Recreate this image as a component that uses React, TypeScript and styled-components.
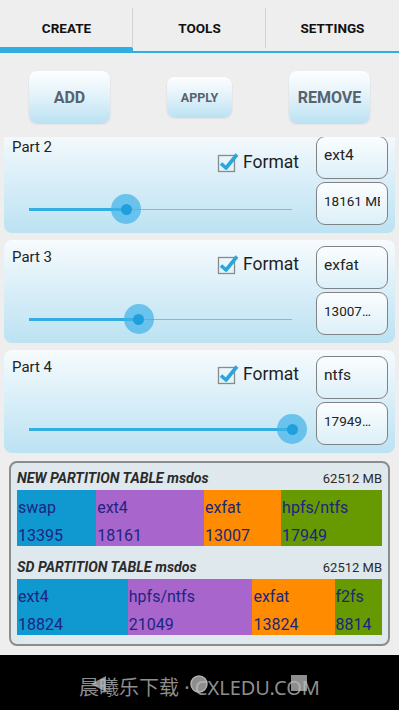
import React from "react";
import styled, { createGlobalStyle } from "styled-components";

const GlobalStyle = createGlobalStyle`
  html, body {
    margin: 0;
    padding: 0;
    background: #eeeeee;
  }
  body {
    font-family: Roboto, "Noto Sans", sans-serif;
  }
  * {
    box-sizing: border-box;
  }
`;

const tabs = ["CREATE", "TOOLS", "SETTINGS"];

// formatDrop: the first (partly scrolled) row draws its checkbox a bit lower
const parts = [
  { name: "Part 2", fs: "ext4", size: "18161 MB", value: 0.369, formatDrop: 8 },
  { name: "Part 3", fs: "exfat", size: "13007…", value: 0.418, formatDrop: 0 },
  { name: "Part 4", fs: "ntfs", size: "17949…", value: 1, formatDrop: 0 },
];

const tables = [
  {
    title: "NEW PARTITION TABLE msdos",
    total: "62512 MB",
    segments: [
      { fs: "swap", size: 13395, w: 79, color: "#1098d1" },
      { fs: "ext4", size: 18161, w: 108, color: "#a866cd" },
      { fs: "exfat", size: 13007, w: 77, color: "#ff8c00" },
      { fs: "hpfs/ntfs", size: 17949, w: 101, color: "#679a00" },
    ],
  },
  {
    title: "SD PARTITION TABLE msdos",
    total: "62512 MB",
    segments: [
      { fs: "ext4", size: 18824, w: 111, color: "#1098d1" },
      { fs: "hpfs/ntfs", size: 21049, w: 125, color: "#a866cd" },
      { fs: "exfat", size: 13824, w: 82, color: "#ff8c00" },
      { fs: "f2fs", size: 8814, w: 47, color: "#679a00" },
    ],
  },
];

const CheckIcon = () => (
  <svg width="22" height="22" viewBox="0 0 22 22">
    <rect x="1.5" y="4.5" width="16" height="16" fill="none" stroke="#8a8a8a" strokeWidth="1.3" />
    <path d="M4 12.5 L9 17 L20 3.5" fill="none" stroke="#2aa6db" strokeWidth="3.6" strokeLinejoin="round" />
  </svg>
);

const App = () => {
  return (
    <Screen>
      <GlobalStyle />
      <TabBar>
        {tabs.map((t, i) => (
          <Tab key={t} $active={i === 0}>
            {t}
          </Tab>
        ))}
      </TabBar>

      <ActionRow>
        <ActionButton $size="large">ADD</ActionButton>
        <ActionButton $size="small">APPLY</ActionButton>
        <ActionButton $size="large">REMOVE</ActionButton>
      </ActionRow>

      <ScrollView>
        <PartList>
          {parts.map((p) => (
            <PartCard key={p.name}>
              <PartLeft>
                <PartTop>
                  <PartLabel>{p.name}</PartLabel>
                  <CheckRow $drop={p.formatDrop}>
                    <CheckIcon />
                    <CheckText>Format</CheckText>
                  </CheckRow>
                </PartTop>
                <Slider>
                  <SliderFill style={{ width: `${p.value * 100}%` }} />
                  <SliderRail />
                  <Thumb style={{ left: `calc(${p.value * 100}% - 15px)` }}>
                    <ThumbDot />
                  </Thumb>
                </Slider>
              </PartLeft>
              <FieldCol>
                <Field $small={false}>
                  <FieldText>{p.fs}</FieldText>
                </Field>
                <Field $small>
                  <FieldText>{p.size}</FieldText>
                </Field>
              </FieldCol>
            </PartCard>
          ))}
        </PartList>
      </ScrollView>

      <TablePanel>
        {tables.map((t) => (
          <TableSection key={t.title}>
            <TableHeader>
              <TableTitle>{t.title}</TableTitle>
              <TableTotal>{t.total}</TableTotal>
            </TableHeader>
            <Bar>
              {t.segments.map((s) => (
                <Segment key={s.fs} $color={s.color} $grow={s.w}>
                  <span>{s.fs}</span>
                  <span>{s.size}</span>
                </Segment>
              ))}
            </Bar>
          </TableSection>
        ))}
      </TablePanel>

      <Spacer />

      <NavBar>
        <NavIcon>
          <svg width="20" height="20" viewBox="0 0 20 20">
            <path d="M2 10 L17 2 L17 18 Z" fill="#8e8e8e" />
          </svg>
        </NavIcon>
        <NavIcon>
          <svg width="22" height="22" viewBox="0 0 22 22">
            <circle cx="11" cy="10" r="8" fill="#8e8e8e" stroke="#b0b0b0" strokeWidth="1.5" />
          </svg>
        </NavIcon>
        <NavIcon>
          <svg width="20" height="20" viewBox="0 0 20 20">
            <rect x="2" y="1" width="16" height="16" fill="#8e8e8e" />
          </svg>
        </NavIcon>
        <Watermark>晨曦乐下载 · CXLEDU.COM</Watermark>
      </NavBar>
    </Screen>
  );
};

export default App;

const Screen = styled.div`
  display: flex;
  flex-direction: column;
  width: 399px;
  height: 710px;
  background: #eeeeee;
  overflow: hidden;
`;

const TabBar = styled.div`
  display: grid;
  grid-template-columns: repeat(3, 1fr);
  height: 53px;
  border-bottom: 2px solid #2eaee3;
`;

const Tab = styled.div<{ $active: boolean }>`
  position: relative;
  display: flex;
  align-items: center;
  justify-content: center;
  padding-top: 4px;
  font-size: 13.5px;
  font-weight: 700;
  color: #111;
  box-shadow: ${(p) => (p.$active ? "inset 0 -4px 0 #2eaee3" : "none")};

  &:not(:last-child)::after {
    content: "";
    position: absolute;
    right: 0;
    top: 8px;
    bottom: 3px;
    width: 1px;
    background: #d2d2d2;
  }
`;

const ActionRow = styled.div`
  display: flex;
  justify-content: space-between;
  align-items: center;
  height: 84px;
  padding: 4px 29px 0 29px;
`;

const ActionButton = styled.div<{ $size: "large" | "small" }>`
  display: flex;
  align-items: center;
  justify-content: center;
  width: ${(p) => (p.$size === "large" ? "81px" : "65px")};
  height: ${(p) => (p.$size === "large" ? "52px" : "40px")};
  border-radius: 8px;
  background: linear-gradient(180deg, #fdfeff 0%, #e4f3fa 45%, #bbe2f3 100%);
  box-shadow: 0 1px 2px rgba(0, 0, 0, 0.12);
  font-size: ${(p) => (p.$size === "large" ? "16px" : "12.5px")};
  font-weight: 700;
  color: #57636d;
`;

const ScrollView = styled.div`
  height: 319px;
  overflow: hidden;
`;

const PartList = styled.div`
  display: flex;
  flex-direction: column;
  gap: 7px;
  padding: 0 4px;
  margin-top: -7px;
`;

const PartCard = styled.div`
  display: flex;
  height: 103px;
  padding: 6px 7px 8px 8px;
  border-radius: 8px;
  background: linear-gradient(180deg, #f7fbfd 0%, #d8eef8 50%, #bce2f2 100%);
`;

const PartLeft = styled.div`
  flex: 1;
  display: flex;
  flex-direction: column;
`;

const PartTop = styled.div`
  display: flex;
  justify-content: space-between;
  align-items: flex-start;
`;

const PartLabel = styled.div`
  margin-top: 2px;
  font-size: 15px;
  line-height: 18px;
  color: #222;
`;

const CheckRow = styled.div<{ $drop: number }>`
  display: flex;
  align-items: center;
  gap: 4px;
  margin-top: ${(p) => 7 + p.$drop}px;
  margin-right: 17px;
`;

const CheckText = styled.span`
  font-size: 17.5px;
  line-height: 22px;
  color: #1e1e1e;
`;

const Slider = styled.div`
  position: relative;
  display: flex;
  align-items: center;
  width: 263px;
  height: 30px;
  margin: auto 0 1px 17px;
`;

const SliderFill = styled.div`
  height: 3px;
  background: #33ade2;
`;

const SliderRail = styled.div`
  flex: 1;
  height: 1px;
  background: #8fb7c8;
`;

const Thumb = styled.div`
  position: absolute;
  top: 0;
  width: 30px;
  height: 30px;
  border-radius: 50%;
  background: rgba(64, 178, 232, 0.7);
  display: flex;
  align-items: center;
  justify-content: center;
`;

const ThumbDot = styled.div`
  width: 11px;
  height: 11px;
  border-radius: 50%;
  background: #1f9fdc;
`;

const FieldCol = styled.div`
  display: flex;
  flex-direction: column;
  gap: 3px;
  width: 72px;
`;

const Field = styled.div<{ $small: boolean }>`
  height: 43px;
  padding: 9px 7px 0 7px;
  border: 1px solid #7f8386;
  border-radius: 9px;
  background: linear-gradient(180deg, #fbfdfe 0%, #dcf0f8 100%);
  font-size: ${(p) => (p.$small ? "13.5px" : "15.5px")};
  line-height: 18px;
  color: #222;
`;

const FieldText = styled.div`
  white-space: nowrap;
  overflow: hidden;
`;

const TablePanel = styled.div`
  margin: 5px 9px 0 9px;
  padding: 3px 6px 9px 6px;
  border: 2px solid #8a8d90;
  border-radius: 8px;
  background: #dee8ed;
  display: flex;
  flex-direction: column;
  gap: 9px;
`;

const TableSection = styled.div`
  display: flex;
  flex-direction: column;
`;

const TableHeader = styled.div`
  display: flex;
  justify-content: space-between;
  align-items: center;
  height: 24px;
  color: #2b2b2b;
`;

const TableTitle = styled.span`
  font-size: 14.2px;
  font-weight: 700;
  font-style: italic;
`;

const TableTotal = styled.span`
  font-size: 13px;
`;

const Bar = styled.div`
  display: flex;
  height: 56px;
`;

const Segment = styled.div<{ $color: string; $grow: number }>`
  flex: ${(p) => p.$grow} 1 0;
  display: flex;
  flex-direction: column;
  padding: 4px 0 0 1px;
  background: ${(p) => p.$color};
  color: #1c2580;
  font-size: 16px;
  line-height: 28px;
  white-space: nowrap;
  overflow: hidden;
`;

const Spacer = styled.div`
  flex: 1;
`;

const NavBar = styled.div`
  position: relative;
  display: flex;
  align-items: flex-start;
  gap: 76px;
  height: 55px;
  padding: 19px 0 0 87px;
  background: #000;
`;

const NavIcon = styled.div`
  display: flex;
  width: 24px;
  justify-content: center;
`;

const Watermark = styled.div`
  position: absolute;
  left: 50%;
  top: 21px;
  transform: translateX(-50%);
  white-space: nowrap;
  font-family: "Noto Sans", "Noto Sans CJK SC", sans-serif;
  font-size: 20px;
  line-height: 24px;
  color: rgba(190, 190, 190, 0.75);
`;
